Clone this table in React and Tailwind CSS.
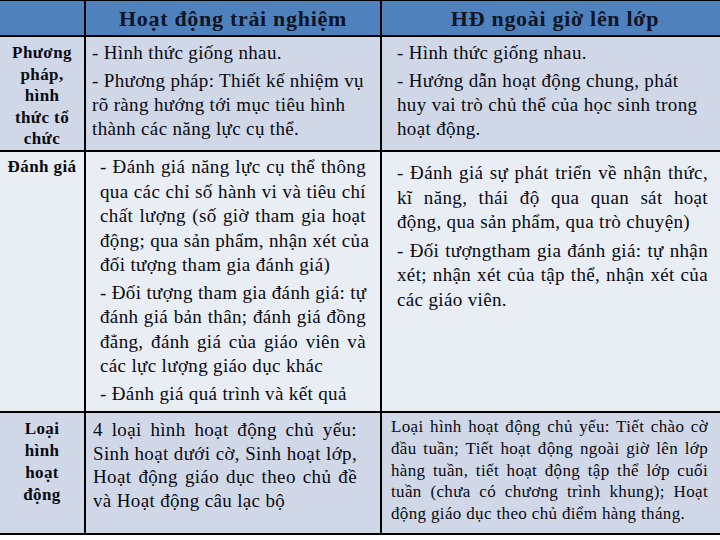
import React from "react";

const L = ({ children, j }) => (
  <div className={j ? "whitespace-nowrap text-justify [text-align-last:justify]" : "whitespace-nowrap"}>{children}</div>
);

export default function App() {
  return (
    <div className="w-[720px] h-[540px] bg-white [font-family:'Liberation_Serif','Times_New_Roman',serif] text-[#0a0a12]">
      <div className="border-t border-black">
        {/* Header */}
        <div className="flex h-[36px] border-b-2 border-black bg-[#4f81bd]">
          <div className="w-[84px]" />
          <div className="w-[296px] border-l-2 border-black pt-[2px] text-center text-[22px] font-bold leading-[32px] tracking-[0.7px] text-[#0d1526]">
            Hoạt động trải nghiệm
          </div>
          <div className="w-[340px] border-l-2 border-black pt-[2px] pl-[8px] text-center text-[22px] font-bold leading-[32px] tracking-[0.7px] text-[#0d1526]">
            HĐ ngoài giờ lên lớp
          </div>
        </div>

        {/* Row 1 */}
        <div className="flex h-[115px] border-b-2 border-black bg-[#d0d8e8]">
          <div className="w-[84px] pt-[5px] text-center text-[17px] font-bold leading-[21.5px] tracking-[0.4px]">
            <L>Phương</L>
            <L>pháp,</L>
            <L>hình</L>
            <L>thức tổ</L>
            <L>chức</L>
          </div>
          <div className="w-[296px] border-l-2 border-black pt-[4px] pl-[6px] text-[19px] leading-[24px] tracking-[0.35px]">
            <L>- Hình thức giống nhau.</L>
            <div className="mt-[4px]">
              <L>- Phương pháp: Thiết kế nhiệm vụ</L>
              <L>rõ ràng hướng tới mục tiêu hình</L>
              <L>thành các năng lực cụ thể.</L>
            </div>
          </div>
          <div className="w-[340px] border-l-2 border-black pt-[4px] pl-[15px] text-[19px] leading-[24px] tracking-[0.35px]">
            <L>- Hình thức giống nhau.</L>
            <div className="mt-[4px]">
              <L>- Hướng dẫn hoạt động chung, phát</L>
              <L>huy vai trò chủ thể của học sinh trong</L>
              <L>hoạt động.</L>
            </div>
          </div>
        </div>

        {/* Row 2 */}
        <div className="flex h-[261px] border-b-2 border-black bg-[#e9edf4]">
          <div className="w-[84px] pt-[4px] text-center text-[17px] font-bold leading-[21px] tracking-[0.4px]">
            <L>Đánh giá</L>
          </div>
          <div className="w-[296px] border-l-2 border-black pt-[3px] pl-[14px] pr-[14px] text-[19px] leading-[24.5px] tracking-[0.35px]">
            <L j>- Đánh giá năng lực cụ thể thông</L>
            <L j>qua các chỉ số hành vi và tiêu chí</L>
            <L j>chất lượng (số giờ tham gia hoạt</L>
            <L j>động; qua sản phẩm, nhận xét của</L>
            <L>đối tượng tham gia đánh giá)</L>
            <div className="mt-[3px]">
              <L j>- Đối tượng tham gia đánh giá: tự</L>
              <L j>đánh giá bản thân; đánh giá đồng</L>
              <L j>đẳng, đánh giá của giáo viên và</L>
              <L>các lực lượng giáo dục khác</L>
            </div>
            <div className="mt-[3px]">
              <L>- Đánh giá quá trình và kết quả</L>
            </div>
          </div>
          <div className="w-[340px] border-l-2 border-black pt-[9px] pl-[15px] pr-[12px] text-[19px] leading-[24.5px] tracking-[0.35px]">
            <L j>- Đánh giá sự phát triển về nhận thức,</L>
            <L j>kĩ năng, thái độ qua quan sát hoạt</L>
            <L>động, qua sản phẩm, qua trò chuyện)</L>
            <div className="mt-[4px]">
              <L j>- Đối tượngtham gia đánh giá: tự nhận</L>
              <L j>xét; nhận xét của tập thể, nhận xét của</L>
              <L>các giáo viên.</L>
            </div>
          </div>
        </div>

        {/* Row 3 */}
        <div className="flex h-[122px] border-b-2 border-black bg-[#d0d8e8]">
          <div className="w-[84px] pt-[5px] text-center text-[17px] font-bold leading-[22px] tracking-[0.4px]">
            <L>Loại</L>
            <L>hình</L>
            <L>hoạt</L>
            <L>động</L>
          </div>
          <div className="w-[296px] border-l-2 border-black pt-[5px] pl-[7px] pr-[23px] text-[19px] leading-[23.5px] tracking-[0.35px]">
            <L j>4 loại hình hoạt động chủ yếu:</L>
            <L j>Sinh hoạt dưới cờ, Sinh hoạt lớp,</L>
            <L j>Hoạt động giáo dục theo chủ đề</L>
            <L>và Hoạt động câu lạc bộ</L>
          </div>
          <div className="w-[340px] border-l-2 border-black pt-[3px] pl-[9px] pr-[12px] text-[17px] leading-[21.75px] tracking-[0.35px]">
            <L j>Loại hình hoạt động chủ yếu: Tiết chào cờ</L>
            <L j>đầu tuần; Tiết hoạt động ngoài giờ lên lớp</L>
            <L j>hàng tuần, tiết hoạt động tập thể lớp cuối</L>
            <L j>tuần (chưa có chương trình khung); Hoạt</L>
            <L>động giáo dục theo chủ điểm hàng tháng.</L>
          </div>
        </div>
      </div>
    </div>
  );
}
